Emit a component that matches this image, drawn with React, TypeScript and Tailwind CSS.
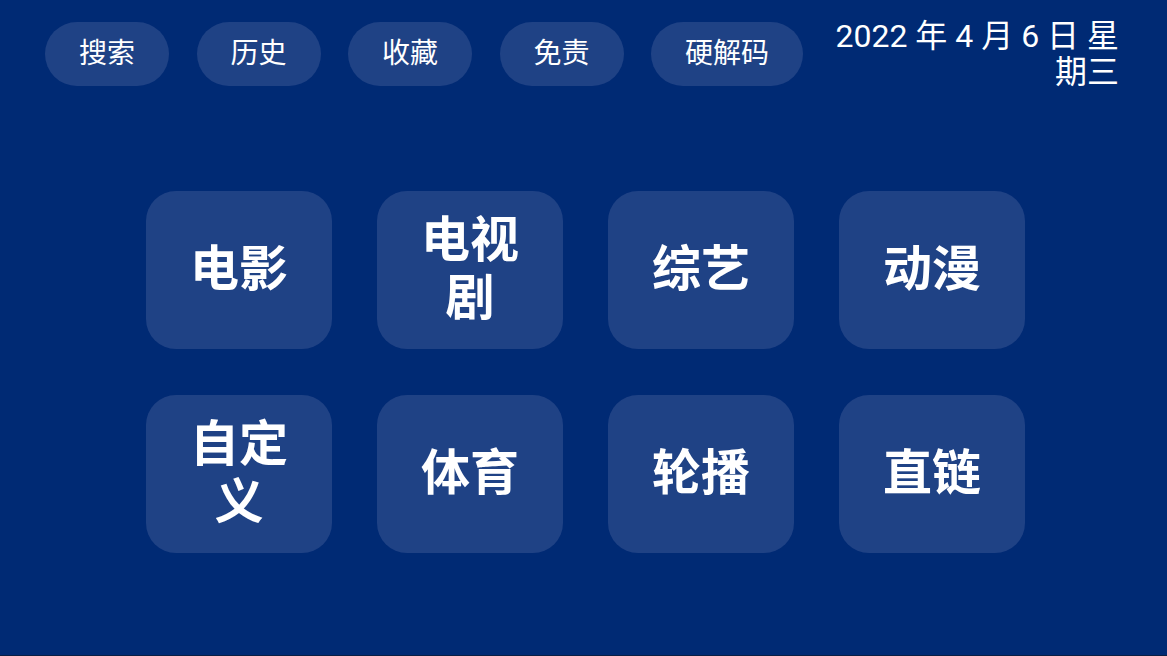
import React from "react";

const pills = ["搜索", "历史", "收藏", "免责", "硬解码"];
const tiles = ["电影", "电视剧", "综艺", "动漫", "自定义", "体育", "轮播", "直链"];

export default function App() {
  return (
    <div
      className="w-[1167px] h-[656px] bg-[#002a74] text-white flex flex-col border-b border-[#0a1f44] overflow-hidden"
      style={{ fontFamily: 'Roboto, "Noto Sans CJK SC", sans-serif' }}
    >
      <div className="flex items-start pl-[45px] pr-[48px] pt-[22px]">
        <div className="flex gap-[27.5px]">
          {pills.map((p) => (
            <div
              key={p}
              className="h-[64px] px-[34px] rounded-full bg-[#1f4285] flex items-center justify-center text-[28px] leading-none"
            >
              {p}
            </div>
          ))}
        </div>
        <div className="ml-auto w-[300px] text-right text-[32px] leading-[36px] -mt-[4px]">
          2022 年 4 月 6 日 星期三
        </div>
      </div>
      <div className="pl-[146px] mt-[101px] grid grid-cols-[repeat(4,186px)] gap-x-[45px] gap-y-[46px]">
        {tiles.map((t) => (
          <div
            key={t}
            className="h-[158px] rounded-[30px] bg-[#1f4285] flex items-center justify-center px-[24px] text-center text-[49px] font-bold leading-[58px]"
          >
            {t}
          </div>
        ))}
      </div>
    </div>
  );
}
